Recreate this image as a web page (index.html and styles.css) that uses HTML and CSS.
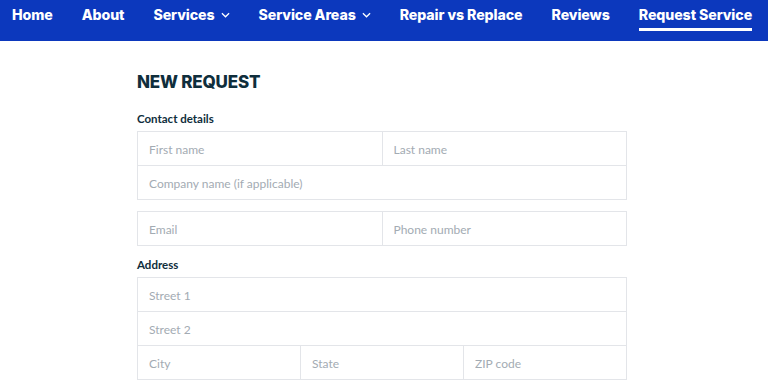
FILE: index.html
```html
<!DOCTYPE html>
<html lang="en">
<head>
    <meta charset="UTF-8">
    <title>New Request</title>
    <link rel="stylesheet" href="styles.css">
</head>
<body>

    <!-- Top Navigation -->
    <nav class="topnav">
        <a href="#">Home</a>
        <a href="#">About</a>
        <a href="#" class="has-menu">Services <svg class="chev" viewBox="0 0 10 6"><path d="M1 1l4 4 4-4"/></svg></a>
        <a href="#" class="has-menu">Service Areas <svg class="chev" viewBox="0 0 10 6"><path d="M1 1l4 4 4-4"/></svg></a>
        <a href="#">Repair vs Replace</a>
        <a href="#">Reviews</a>
        <a href="#" class="active">Request Service</a>
    </nav>

    <!-- Request Form -->
    <main class="page">
        <h1>NEW REQUEST</h1>

        <form class="request-form">
            <div class="group-label">Contact details</div>
            <div class="field-box cols-2">
                <input type="text" placeholder="First name">
                <input type="text" placeholder="Last name">
                <input type="text" class="span-all" placeholder="Company name (if applicable)">
            </div>

            <div class="field-box cols-2">
                <input type="email" placeholder="Email">
                <input type="tel" placeholder="Phone number">
            </div>

            <div class="group-label">Address</div>
            <div class="field-box cols-3">
                <input type="text" class="span-all" placeholder="Street 1">
                <input type="text" class="span-all" placeholder="Street 2">
                <input type="text" placeholder="City">
                <input type="text" placeholder="State">
                <input type="text" placeholder="ZIP code">
            </div>
        </form>
    </main>

</body>
</html>
```

FILE: styles.css
```css
/* Base Styles */
body {
    margin: 0;
    font-family: Lato, "Open Sans", sans-serif;
    color: #0f2e3c;
    background: #fff;
}

/* Navigation */
.topnav {
    height: 41px;
    background-color: #0c38bd;
    display: flex;
    align-items: flex-start;
    gap: 29px;
    padding: 0 12px;
    white-space: nowrap;
}

.topnav a {
    flex-shrink: 0;
    color: #fff;
    text-decoration: none;
    font-family: Inter, sans-serif;
    font-weight: 800;
    font-size: 14.2px;
    letter-spacing: -0.1px;
    line-height: 18px;
    padding-top: 6px;
    padding-bottom: 4px;
    display: flex;
    align-items: center;
    gap: 6px;
}

.topnav a.active {
    border-bottom: 3px solid #fff;
}

.chev {
    width: 9px;
    height: 6px;
    fill: none;
    stroke: #fff;
    stroke-width: 1.4;
}

/* Page */
.page {
    width: 490px;
    margin-left: 137px;
    padding-top: 29px;
}

h1 {
    margin: 0 0 18px;
    font-family: Inter, sans-serif;
    font-weight: 800;
    font-size: 17px;
    line-height: 24px;
    letter-spacing: -0.2px;
    color: #0f2e3c;
}

.group-label {
    font-weight: bold;
    font-size: 11.5px;
    line-height: 14px;
    margin-bottom: 5px;
}

.field-box + .group-label {
    margin-top: 12px;
}

/* Field boxes */
.field-box {
    display: grid;
    border-top: 1px solid #e3e5e9;
    border-left: 1px solid #e3e5e9;
    margin-bottom: 11px;
}

.cols-2 {
    grid-template-columns: 1fr 1fr;
}

.cols-3 {
    grid-template-columns: 1fr 1fr 1fr;
}

.span-all {
    grid-column: 1 / -1;
}

.field-box input {
    box-sizing: border-box;
    height: 34px;
    min-width: 0;
    margin: 0;
    border: none;
    border-right: 1px solid #e3e5e9;
    border-bottom: 1px solid #e3e5e9;
    padding: 1px 11px 0;
    font-family: Lato, "Open Sans", sans-serif;
    font-size: 12px;
    color: #0f2e3c;
    background: #fff;
    outline: none;
}

.field-box input::placeholder {
    color: #a3abb3;
}
```
